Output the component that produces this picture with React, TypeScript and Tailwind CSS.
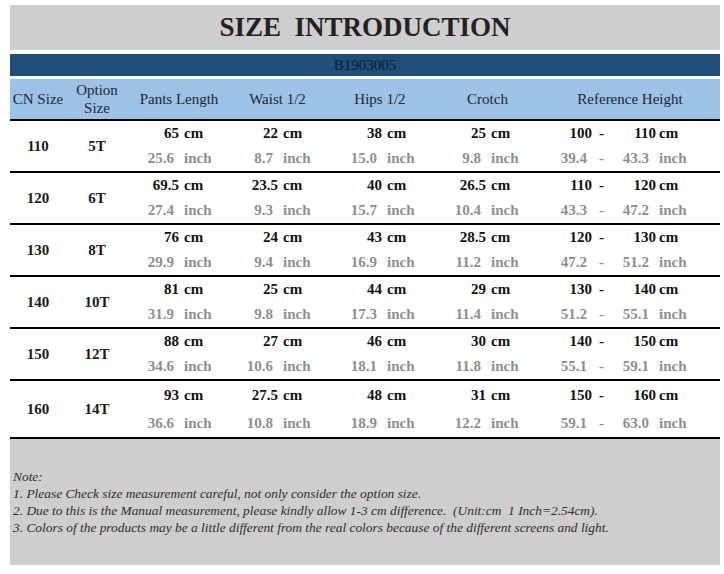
const serif = { fontFamily: '"Liberation Serif", "Times New Roman", serif' };

type Row = {
  cn: string;
  opt: string;
  pants: [string, string];
  waist: [string, string];
  hips: [string, string];
  crotch: [string, string];
  ref: [string, string, string, string];
};

const rows: Row[] = [
  { cn: '110', opt: '5T', pants: ['65', '25.6'], waist: ['22', '8.7'], hips: ['38', '15.0'], crotch: ['25', '9.8'], ref: ['100', '110', '39.4', '43.3'] },
  { cn: '120', opt: '6T', pants: ['69.5', '27.4'], waist: ['23.5', '9.3'], hips: ['40', '15.7'], crotch: ['26.5', '10.4'], ref: ['110', '120', '43.3', '47.2'] },
  { cn: '130', opt: '8T', pants: ['76', '29.9'], waist: ['24', '9.4'], hips: ['43', '16.9'], crotch: ['28.5', '11.2'], ref: ['120', '130', '47.2', '51.2'] },
  { cn: '140', opt: '10T', pants: ['81', '31.9'], waist: ['25', '9.8'], hips: ['44', '17.3'], crotch: ['29', '11.4'], ref: ['130', '140', '51.2', '55.1'] },
  { cn: '150', opt: '12T', pants: ['88', '34.6'], waist: ['27', '10.6'], hips: ['46', '18.1'], crotch: ['30', '11.8'], ref: ['140', '150', '55.1', '59.1'] },
  { cn: '160', opt: '14T', pants: ['93', '36.6'], waist: ['27.5', '10.8'], hips: ['48', '18.9'], crotch: ['31', '12.2'], ref: ['150', '160', '59.1', '63.0'] },
];

const cols = 'grid grid-cols-[56px_62px_102px_95px_110px_105px_180px]';

// number right-aligned, unit at a fixed x inside the column
const Measure = ({ v, pl, lh }: { v: [string, string]; pl: string; lh: string }) => (
  <div className={`flex flex-col justify-center ${pl}`}>
    <div className={`flex ${lh} text-[#111]`}>
      <span className="w-[40px] text-right">{v[0]}</span>
      <span className="ml-[5px]">cm</span>
    </div>
    <div className={`flex ${lh} text-[#8e8e8e]`}>
      <span className="w-[40px] pr-[5px] text-right">{v[1]}</span>
      <span className="ml-[5px]">inch</span>
    </div>
  </div>
);

const RefHeight = ({ v, lh }: { v: [string, string, string, string]; lh: string }) => (
  <div className="flex flex-col justify-center pl-[12px]">
    <div className={`flex ${lh} text-[#111]`}>
      <span className="w-[40px] text-right">{v[0]}</span>
      <span className="w-[19px] text-center">-</span>
      <span className="w-[45px] text-right">{v[1]}</span>
      <span className="ml-[3px]">cm</span>
    </div>
    <div className={`flex ${lh} text-[#8e8e8e]`}>
      <span className="w-[40px] pr-[5px] text-right">{v[2]}</span>
      <span className="w-[19px] text-center">-</span>
      <span className="w-[45px] pr-[7px] text-right">{v[3]}</span>
      <span className="ml-[3px]">inch</span>
    </div>
  </div>
);

export default function App() {
  return (
    <div className="min-h-[574px] bg-white pt-[5px]" style={serif}>
      <div className="mx-[10px] w-[710px]">
        <div className="flex h-[45px] items-center justify-center bg-[#cfcdce]">
          <h1 className="whitespace-pre text-[27px] font-bold text-[#222]">SIZE  INTRODUCTION</h1>
        </div>

        <div className="mt-[4px] flex h-[22px] items-center justify-center bg-[#1f4e79] text-[15px] text-[#0f1d2e]">
          B1903005
        </div>

        <div className={`${cols} mt-[3px] h-[42px] border-b-2 border-black bg-[#9cc2e5] text-[15px] text-[#1f2733]`}>
          <div className="flex items-center justify-center">CN Size</div>
          <div className="flex flex-col items-center justify-center leading-[18px]">
            <span>Option</span>
            <span>Size</span>
          </div>
          <div className="flex items-center justify-center">Pants Length</div>
          <div className="flex items-center justify-center">Waist 1/2</div>
          <div className="flex items-center justify-center">Hips 1/2</div>
          <div className="flex items-center justify-center">Crotch</div>
          <div className="flex items-center justify-center">Reference Height</div>
        </div>

        {rows.map((r, i) => {
          const last = i === rows.length - 1;
          const lh = last ? 'leading-[28px]' : 'leading-[25px]';
          return (
            <div
              key={r.cn}
              className={`${cols} ${last ? 'h-[58px]' : 'h-[52px]'} border-b-2 border-black text-[15px] font-bold`}
            >
              <div className="flex items-center justify-center text-[#1a1a1a]">{r.cn}</div>
              <div className="flex items-center justify-center text-[#1a1a1a]">{r.opt}</div>
              <Measure v={r.pants} pl="pl-[11px]" lh={lh} />
              <Measure v={r.waist} pl="pl-[8px]" lh={lh} />
              <Measure v={r.hips} pl="pl-[17px]" lh={lh} />
              <Measure v={r.crotch} pl="pl-[11px]" lh={lh} />
              <RefHeight v={r.ref} lh={lh} />
            </div>
          );
        })}

        <div className="h-[126px] bg-[#cfcdce] pl-[3px] pt-[29px] text-[13.4px] italic leading-[17px] text-[#2e2e2e]">
          <p>Note:</p>
          <p>1. Please Check size measurement careful, not only consider the option size.</p>
          <p className="whitespace-pre">2. Due to this is the Manual measurement, please kindly allow 1-3 cm difference.  (Unit:cm  1 Inch=2.54cm).</p>
          <p>3. Colors of the products may be a little different from the real colors because of the different screens and light.</p>
        </div>
      </div>
    </div>
  );
}
